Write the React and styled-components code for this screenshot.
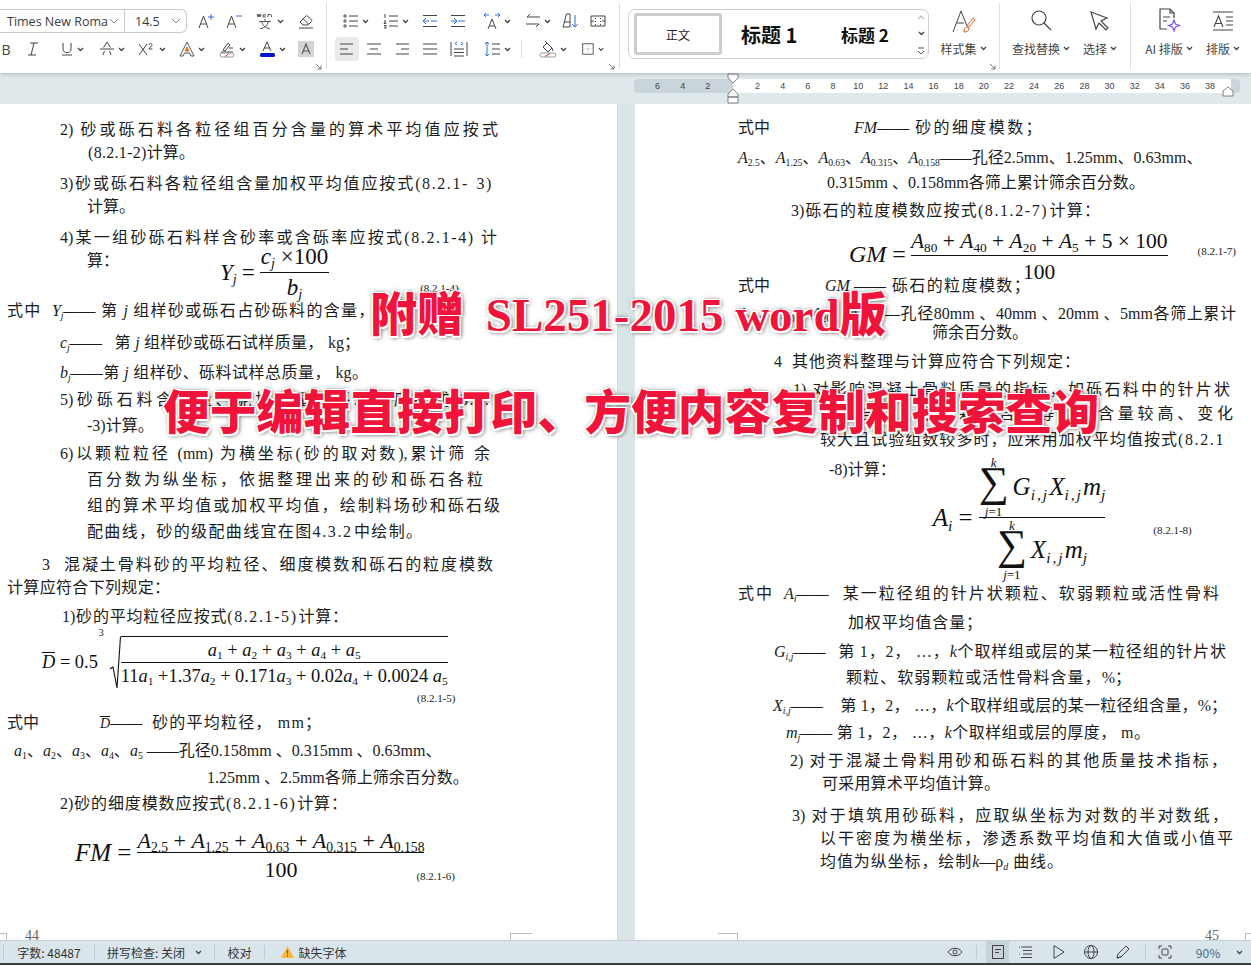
import styled, { createGlobalStyle } from "styled-components";

const GlobalStyle = createGlobalStyle`
  html, body {
    margin: 0;
    height: 100%;
    overflow: hidden;
    background: #dfe8ea;
  }
  * { box-sizing: border-box; }
`;

const UI_FONT = `"Noto Sans CJK SC", "Noto Sans", sans-serif`;
const DOC_FONT = `"Liberation Serif", "Noto Sans CJK SC", serif`;

const Shell = styled.div`
  width: 1251px;
  height: 965px;
  display: flex;
  overflow: hidden;
  flex-direction: column;
  font-family: ${UI_FONT};
`;

/* ---------- ribbon ---------- */
const Toolbar = styled.header`
  z-index: 2;
  height: 73px;
  display: flex;
  flex: 0 0 73px;
  background: #fff;
  box-shadow: 0 1px 4px rgba(60, 70, 75, 0.3);
`;

const Group = styled.section`
  position: relative;
  padding-top: 7px;
  width: ${(p) => p.$w}px;
  margin-left: ${(p) => p.$ml || 0}px;
  padding-left: ${(p) => p.$pl || 0}px;
  display: ${(p) => (p.$flex ? "flex" : "block")};
`;

const Divider = styled.div`
  width: 1px;
  margin: 3px 0 4px;
  background: #dcdfe0;
`;

const Launcher = styled.svg`
  position: absolute;
  right: ${(p) => p.$r || 4}px;
  bottom: 3px;
  width: 7px;
  height: 7px;
`;

const Row = styled.div`
  height: 28px;
  display: flex;
  align-items: center;
  padding-left: ${(p) => p.$pl || 0}px;
`;

const Tool = styled.button`
  border: 0;
  padding: 0;
  height: 24px;
  display: flex;
  flex: 0 0 auto;
  color: #444;
  background: ${(p) => (p.$on ? "#e8e9ea" : "transparent")};
  border-radius: 4px;
  align-items: center;
  justify-content: center;
  gap: ${(p) => p.$gap ?? 3}px;
  width: ${(p) => p.$w}px;
  font: 14px "Open Sans", sans-serif;
`;

const SelectBox = styled.div`
  height: 24px;
  display: flex;
  flex: 0 0 auto;
  color: #3c3c3c;
  font-size: 12.5px;
  padding-left: ${(p) => p.$pl}px;
  align-items: center;
  justify-content: space-between;
  width: ${(p) => p.$w}px;
  border: 1px solid #c9c9c9;
  border-left-width: ${(p) => (p.$joined ? 0 : 1)}px;
  border-radius: ${(p) => (p.$joined ? "0 6px 6px 0" : "6px 0 0 6px")};
  font-family: "Open Sans", "Noto Sans", sans-serif;
`;

const SelectCaret = styled.span`
  display: flex;
  padding-right: 5px;
`;

const StyleBox = styled.div`
  height: 50px;
  width: 301px;
  display: flex;
  margin: 2px 0 0 8px;
  padding: 3px 0 0 5px;
  border-radius: 7px;
  border: 1px solid #cfcfcf;
`;

const NormalCard = styled.div`
  width: 88px;
  height: 42px;
  color: #222;
  display: flex;
  font-size: 12px;
  border-radius: 3px;
  align-items: center;
  justify-content: center;
  border: 3px solid #cdcdcd;
`;

const HeadingCard = styled.div`
  height: 42px;
  color: #111;
  display: flex;
  font-weight: 700;
  white-space: pre;
  align-items: center;
  font-size: ${(p) => p.$size}px;
  width: ${(p) => p.$w}px;
  padding-left: ${(p) => p.$pl}px;
`;

const ScrollArrows = styled.div`
  width: 14px;
  display: flex;
  padding-top: 2px;
  align-items: center;
  flex-direction: column;
  justify-content: space-between;
  height: 42px;
`;

const LargeTool = styled.div`
  flex: 0 0 auto;
  display: flex;
  align-items: center;
  flex-direction: column;
  width: ${(p) => p.$w}px;
`;

const LargeIcon = styled.div`
  height: 28px;
  display: flex;
  align-items: center;
`;

const LargeLabel = styled.div`
  gap: 3px;
  height: 26px;
  color: #444;
  display: flex;
  font-size: 12px;
  white-space: nowrap;
  align-items: center;
`;

/* ---------- ruler ---------- */
const RulerBand = styled.div`
  height: 31px;
  flex: 0 0 31px;
  position: relative;
  background: #dfe8ea;
  padding: 6px 11px 0 634px;
`;

const RulerTrack = styled.div`
  height: 14px;
  display: flex;
  overflow: hidden;
  border-radius: 4px;
  background: #fff;
`;

const RulerMargin = styled.div`
  height: 14px;
  color: #444;
  display: flex;
  font-size: 9px;
  align-items: center;
  background: #c9d5da;
  flex: 0 0 ${(p) => p.$w}px;
  padding-left: ${(p) => p.$pl || 0}px;
  font-family: "Liberation Sans", sans-serif;
`;

const RulerBody = styled.div`
  flex: 1;
  height: 14px;
  color: #444;
  display: flex;
  font-size: 9px;
  align-items: center;
  padding-left: 12px;
  font-family: "Liberation Sans", sans-serif;
`;

const RulerTick = styled.span`
  flex: 0 0 25.15px;
  text-align: center;
`;

const RulerMarker = styled.svg`
  position: absolute;
  top: ${(p) => p.$top}px;
  left: ${(p) => p.$left}px;
  width: 12px;
  height: ${(p) => p.$h}px;
`;

/* ---------- document ---------- */
const Pages = styled.main`
  flex: 1;
  min-height: 0;
  display: flex;
  position: relative;
  overflow: hidden;
`;

const Page = styled.article`
  height: 100%;
  display: flex;
  overflow: hidden;
  background: #fff;
  color: #1c1c1c;
  flex-direction: column;
  font-family: ${DOC_FONT};
  width: ${(p) => p.$w}px;
  padding-top: ${(p) => p.$pt}px;
`;

const Gutter = styled.div`
  flex: 0 0 18px;
  background: #dae5e8;
  border-left: 1px solid #cfdbdf;
`;

const Line = styled.p`
  margin: 0;
  height: 20px;
  flex: 0 0 20px;
  font-size: 16px;
  line-height: 20px;
  white-space: nowrap;
  margin-top: ${(p) => p.$mt || 0}px;
  margin-left: ${(p) => p.$x}px;
  width: ${(p) => (p.$w ? `${p.$w}px` : "auto")};
  text-align: justify;
  text-align-last: ${(p) => (p.$w ? "justify" : "auto")};
`;

const SmallLine = styled(Line)`
  height: 14px;
  flex-basis: 14px;
  font-size: 11px;
  line-height: 14px;
`;

const FormulaRow = styled.div`
  display: flex;
  align-items: flex-start;
  flex: 0 0 ${(p) => p.$h}px;
  height: ${(p) => p.$h}px;
  margin-top: ${(p) => p.$mt || 0}px;
`;

const RowLine = styled(Line)`
  flex: 0 0 auto;
`;

const Formula = styled.div`
  gap: ${(p) => p.$gap ?? 4}px;
  display: flex;
  flex: 0 0 auto;
  color: #111;
  align-items: center;
  white-space: nowrap;
  font-size: ${(p) => p.$size}px;
  margin-left: ${(p) => p.$ml}px;
  margin-top: ${(p) => p.$mt || 0}px;
`;

const FormulaHead = styled.span`
  position: relative;
  top: ${(p) => p.$up ? -p.$up : 0}px;
`;

const Frac = styled.div`
  display: flex;
  align-items: center;
  flex-direction: column;
  font-size: ${(p) => (p.$size ? `${p.$size}px` : "inherit")};
`;

const FracPart = styled.div`
  width: 100%;
  text-align: center;
  line-height: ${(p) => p.$lh - 2 * (p.$up || 0)}px;
  height: ${(p) => p.$lh}px;
  border-bottom: ${(p) => (p.$over ? "1px solid #111" : "0")};
  padding: 0 ${(p) => p.$px || 0}px;
`;

const V = styled.i`
  font-style: italic;
`;

const Sub = styled.sub`
  line-height: 0;
  font-size: ${(p) => p.$fs || 0.62}em;
  vertical-align: ${(p) => p.$va ?? -0.3}em;
  letter-spacing: ${(p) => p.$ls || 0}px;
  font-style: ${(p) => (p.$i ? "italic" : "normal")};
`;

const EqNo = styled.span`
  font-size: 11px;
  color: #222;
  white-space: nowrap;
  margin-left: ${(p) => p.$ml}px;
  margin-top: ${(p) => p.$mt || 0}px;
`;

const Space = styled.span`
  display: inline-block;
  width: ${(p) => p.$w}px;
`;

const Num = styled.span`
  letter-spacing: ${(p) => p.$ls ?? 1.6}px;
`;

const OverBar = styled.span`
  display: inline-block;
  line-height: 1;
  border-top: 1px solid #111;
  font-size: ${(p) => (p.$size ? `${p.$size}px` : "inherit")};
`;

const CubeRoot = styled.div`
  display: flex;
  position: relative;
  align-items: stretch;
`;

const RootIndex = styled.span`
  position: absolute;
  top: -9px;
  left: -10px;
  font-size: 10px;
`;

const RootBody = styled.div`
  border-top: 1px solid #111;
`;

const SumCol = styled.span`
  display: inline-flex;
  align-items: center;
  flex-direction: column;
  vertical-align: middle;
`;

const SumLimit = styled.span`
  height: 13px;
  font-size: 13px;
  line-height: 13px;
`;

const SumSign = styled.span`
  height: 36px;
  font-size: 42px;
  line-height: 26px;
`;

const SumTerm = styled.div`
  gap: 4px;
  display: flex;
  align-items: center;
  justify-content: center;
`;

const PageFoot = styled.div`
  height: 12px;
  display: flex;
  margin-top: auto;
  position: relative;
`;

const PageNo = styled.span`
  position: absolute;
  top: 0;
  color: #666;
  font-size: 14px;
  left: ${(p) => p.$x}px;
`;

const CropMark = styled.div`
  position: absolute;
  top: 5px;
  height: 10px;
  border-top: 1px solid #bbb;
  left: ${(p) => p.$x}px;
  width: ${(p) => p.$w}px;
  border-left: ${(p) => (p.$side === "l" ? "1px solid #bbb" : "0")};
  border-right: ${(p) => (p.$side === "r" ? "1px solid #bbb" : "0")};
`;

/* ---------- promo text over the pages ---------- */
const Promo = styled.div`
  position: absolute;
  left: ${(p) => p.$x}px;
  top: ${(p) => p.$y}px;
  color: #f0143a;
  font-weight: 900;
  white-space: nowrap;
  font-size: ${(p) => p.$size}px;
  line-height: 1;
  letter-spacing: ${(p) => p.$ls || 0}px;
  font-family: "Liberation Serif", "Noto Sans CJK SC", serif;
  text-shadow: -1.5px -1.5px 0 #fff, 1.5px -1.5px 0 #fff, -1.5px 1.5px 0 #fff,
    1.5px 1.5px 0 #fff, 0 0 5px rgba(0, 0, 0, 0.55), 2px 2px 4px rgba(0, 0, 0, 0.5);
`;

/* ---------- status bar ---------- */
const StatusBar = styled.footer`
  height: 25px;
  flex: 0 0 25px;
  color: #333;
  display: flex;
  font-size: 12px;
  align-items: center;
  background: #d9e5ea;
  border-top: 1px solid #c5d2d7;
  border-bottom: 2px solid #3a3f42;
  justify-content: space-between;
`;

const StatusSide = styled.div`
  height: 100%;
  display: flex;
  align-items: center;
`;

const StatusItem = styled.div`
  gap: 4px;
  height: 100%;
  display: flex;
  flex: 0 0 ${(p) => p.$w}px;
  align-items: center;
  justify-content: center;
  white-space: nowrap;
  background: ${(p) => (p.$on ? "#c6d3d8" : "transparent")};
  color: ${(p) => (p.$blue ? "#3f6a8a" : "inherit")};
`;

const StatusSep = styled.span`
  width: 1px;
  height: 14px;
  flex: 0 0 1px;
  background: #bccad0;
`;

const RibbonSep = styled(StatusSep)`
  height: 18px;
  background: #dcdfe0;
`;

/* ---------- icons ---------- */
const Svg = ({ size = 20, w, h, children, sw = 1, color = "#444" }) => (
  <svg
    width={w || size}
    height={h || size}
    viewBox={`0 0 ${w || size} ${h || size}`}
    fill="none"
    stroke={color}
    strokeWidth={sw}
  >
    {children}
  </svg>
);

const Caret = () => (
  <svg width="7" height="5" viewBox="0 0 7 5" fill="none" stroke="#444" strokeWidth="1.3">
    <path d="M1 1l2.5 2.5L6 1" />
  </svg>
);

const ThinCaret = () => (
  <svg width="10" height="6" viewBox="0 0 10 6" fill="none" stroke="#888" strokeWidth="1">
    <path d="M1 1l4 4 4-4" />
  </svg>
);

const Corner = ({ r }) => (
  <Launcher $r={r} viewBox="0 0 7 7" fill="none" stroke="#666" strokeWidth="0.9">
    <path d="M1 1l5 5M6 2.5V6H2.5" />
  </Launcher>
);

const Bars = ({ rows }) => (
  <Svg size={18}>
    {rows.map(([x1, x2, y], i) => (
      <path key={i} d={`M${x1} ${y}H${x2}`} />
    ))}
  </Svg>
);

const GrowA = ({ plus }) => (
  <Svg size={18}>
    <path d="M2 16L6.5 4 11 16M3.6 12h5.8" />
    {plus ? (
      <path d="M11 5h6M14 2v6" stroke="#2a6fe0" />
    ) : (
      <path d="M11 4h6" stroke="#2a6fe0" />
    )}
  </Svg>
);

const Pinyin = () => (
  <Svg w={18} h={18} sw={0.9}>
    <path d="M1 2l1 3 1-3 1 3 1-3M7 3h3M7 5h3M7 3v2M12 5V2.500h2.500c1 0 1 1 1 2.500" />
    <path d="M9 7v2M3 9.500h12M5.500 9.500c1 4 4 6.500 8.500 7.500M12.500 9.500c-1 4-4 6.500-8.500 7.500" />
  </Svg>
);

const Eraser = () => (
  <Svg size={18}>
    <path d="M3 10l6-6a1 1 0 011.5 0l4 4a1 1 0 010 1.5L11 13H6z" />
    <path d="M6 6.5l5.5 5.5M2 16h14" />
  </Svg>
);

const Strike = () => (
  <Svg size={16}>
    <path d="M4.500 6.500L8 1l3.500 5.500M1 8h14M4 14l1.500-4M12 14l-1.500-4" />
  </Svg>
);

const Super = () => (
  <Svg w={18} h={14}>
    <path d="M1 13L9 2M1 2l8 11" />
    <path d="M11 3c0-2 3-2 3 0 0 1-3 3-3 4h3.500" />
  </Svg>
);

const OutlineA = () => (
  <Svg size={16} color="#555">
    <path d="M1 15L8 1l7 14h-3l-1.5-3h-5L4 15z" />
    <path d="M6.3 10L8 6l1.7 4z" fill="#e8862a" stroke="#d46a1a" />
  </Svg>
);

const Highlighter = () => (
  <Svg size={18}>
    <path d="M5 10l5-7 2 2-5 6zM11 8h4M3 12h12" />
    <rect x="2" y="13" width="14" height="4" rx="2" stroke="#999" />
    <path d="M7 16.5l4-3" stroke="#e33" />
  </Svg>
);

const ColorA = () => (
  <Svg size={18}>
    <path d="M5 11L9 2l4 9M6.2 8h5.6" />
    <rect x="2" y="13" width="15" height="4" rx="1.5" fill="#0018c8" stroke="none" />
  </Svg>
);

const GreyA = () => (
  <svg width="16" height="16" viewBox="0 0 16 16" fill="none" stroke="#555" strokeWidth="1.1">
    <rect width="16" height="16" fill="#d4d4d4" stroke="none" />
    <path d="M4 13L8 3l4 10M5.3 10h5.4" />
  </svg>
);

const ListBullets = () => (
  <Svg size={16}>
    <circle cx="2" cy="3" r="1.2" />
    <circle cx="2" cy="8" r="1.2" />
    <circle cx="2" cy="13" r="1.2" />
    <path d="M6 3h9M6 8h9M6 13h9" />
  </Svg>
);

const ListNumbers = () => (
  <Svg size={16}>
    <path d="M2 1v4M1 8h2L1 10.5h2.4M1 12.5h2.2l-1 1.2 1 1.3H1" sw="0.9" />
    <path d="M6 3h9M6 8h9M6 13h9" />
  </Svg>
);

const OutIndent = ({ flip }) => (
  <Svg size={16}>
    <path d="M1 2.5h14M1 13.5h14" />
    {flip ? (
      <path d="M8 8h7M1 8h6M4 5l3 3-3 3" stroke="#2a6fe0" />
    ) : (
      <path d="M1 8h6M9 8h6M4 5L1 8l3 3" stroke="#2a6fe0" />
    )}
  </Svg>
);

const SpacedA = () => (
  <Svg size={18}>
    <path d="M5 17l4-10 4 10M6.3 14h5.4" />
    <path d="M1 3h5M3 1L1 3l2 2M12 3h5M15 1l2 2-2 2" stroke="#2a6fe0" />
  </Svg>
);

const Swap = () => (
  <Svg size={16}>
    <path d="M15 4H2l3-3M1 11h13l-3 3" />
  </Svg>
);

const SortA = () => (
  <Svg size={18}>
    <path d="M2 15L5.5 2H9v13M3 10h6M2 15h7" />
    <path d="M14 3v12M11 12l3 3 3-3" stroke="#2a6fe0" />
  </Svg>
);

const TableDash = () => (
  <Svg size={16}>
    <path d="M1 3h14v10H1zM5.5 5v1M5.5 8v1M5.5 11v1M10.5 5v1M10.5 8v1M10.5 11v1M1 8h3M12 8h3" />
  </Svg>
);

const DistAlign = () => (
  <Svg size={18}>
    <path d="M1 2v14M17 2v14M4 9h10M4 12.5h10M4 16h10" />
    <path d="M7 5L5 3.5 7 2M11 5l2-1.500L11 2" stroke="#2a6fe0" />
  </Svg>
);

const LineSpacing = () => (
  <Svg size={18}>
    <path d="M9 4h8M9 9h8M9 14h8" />
    <path d="M4 2v14M2 4l2-2 2 2M2 14l2 2 2-2" stroke="#2a6fe0" />
  </Svg>
);

const Shading = () => (
  <Svg size={18}>
    <path d="M4 7l4-4 5 5-4 4zM8 3L6 1M13 8l1 3" />
    <rect x="1" y="13" width="16" height="4" rx="2" stroke="#999" />
    <path d="M6 16.500l5-3" stroke="#e33" />
  </Svg>
);

const BorderBox = () => (
  <Svg size={16}>
    <rect x="2" y="2" width="12" height="12" />
    <path d="M8 4v1M8 7v2M8 11v1M4 8h1M7 8h2M11 8h1" stroke="#aaa" />
  </Svg>
);

const StyleSetIcon = () => (
  <Svg size={26}>
    <path d="M2 24L10 3l6 15M6 15h7" />
    <path d="M16 18l6-8 2 2-6 7z" stroke="#d4602a" />
    <path d="M13 24c0-3 1-5 3-5l2 1c0 3-2 4-5 4z" stroke="#d4602a" />
  </Svg>
);

const SearchIcon = () => (
  <Svg size={24} sw={1.2}>
    <circle cx="10" cy="9" r="7" />
    <path d="M15 14l7 7" />
  </Svg>
);

const PointerIcon = () => (
  <Svg size={24} sw={1.2}>
    <path d="M3 3l16 6-6 3 7 7-2 2-7-7-3 6z" />
  </Svg>
);

const AiDocIcon = () => (
  <Svg size={26} sw={1.2}>
    <path d="M18 10V5l-4-4H4v20h7" />
    <path d="M14 1v4h4M7 9h7M7 13h4" />
    <path d="M18 12l1.5 4 4 1.500-4 1.500-1.500 4-1.500-4-4-1.500 4-1.500z" stroke="#7a4ff0" />
  </Svg>
);

const LayoutIcon = () => (
  <Svg size={24} sw={1.1}>
    <path d="M2 3h20M2 21h20M3 18L7.500 7l4.500 11M4.500 14.500h6M15 8h7M15 12h7M15 16h7" />
  </Svg>
);

const Warn = () => (
  <svg width="13" height="12" viewBox="0 0 13 12">
    <path d="M6.500 0L13 12H0z" fill="#f6b73c" />
    <path d="M6.500 4v4M6.500 9v1.500" stroke="#a25a00" strokeWidth="1.200" />
  </svg>
);

const EyeIcon = () => (
  <Svg size={16}>
    <path d="M1 8c3-5 11-5 14 0-3 5-11 5-14 0z" />
    <circle cx="8" cy="8" r="2" />
  </Svg>
);

const DocIcon = () => (
  <Svg size={16}>
    <rect x="2.500" y="1.500" width="11" height="13" />
    <path d="M5 5.500h6M5 8.500h4" />
  </Svg>
);

const OutlineIcon = () => (
  <Svg size={16}>
    <path d="M3 3h11M5 6.500h9M5 10h9M3 13.500h11M1 3h.8M1 10h.8" />
  </Svg>
);

const PlayIcon = () => (
  <Svg size={16}>
    <path d="M3 1.500l10 6.500-10 6.500z" />
  </Svg>
);

const GlobeIcon = () => (
  <Svg size={16}>
    <circle cx="8" cy="8" r="6.500" />
    <ellipse cx="8" cy="8" rx="3" ry="6.500" />
    <path d="M1.500 8h13" />
  </Svg>
);

const PenIcon = () => (
  <Svg size={16}>
    <path d="M2 14l1-4 8-8 3 3-8 8z" />
    <path d="M2 14l4-1" />
  </Svg>
);

const FitIcon = () => (
  <Svg size={16}>
    <path d="M2 5V2h3M11 2h3v3M14 11v3h-3M5 14H2v-3" />
    <rect x="5" y="5" width="6" height="6" rx="1" />
  </Svg>
);

const UpCaret = () => (
  <svg width="8" height="5" viewBox="0 0 8 5" fill="none" stroke="#bbb" strokeWidth="1.200">
    <path d="M1 4l3-3 3 3" />
  </svg>
);

const MoreCaret = () => (
  <svg width="8" height="8" viewBox="0 0 8 8" fill="none" stroke="#555" strokeWidth="1">
    <path d="M1 1h6M1 4l3 3 3-3" />
  </svg>
);

/* ---------- ribbon data ---------- */
const rulerLeft = [6, 4, 2];
const rulerRight = [2, 4, 6, 8, 10, 12, 14, 16, 18, 20, 22, 24, 26, 28, 30, 32, 34, 36, 38];

const Ribbon = () => (
  <Toolbar>
    <Group $w={336} $ml={-10}>
      <Row>
        <SelectBox $w={135} $pl={16}>
          Times New Roma
          <SelectCaret>
            <ThinCaret />
          </SelectCaret>
        </SelectBox>
        <SelectBox $w={62} $pl={10} $joined>
          14.5
          <SelectCaret>
            <ThinCaret />
          </SelectCaret>
        </SelectBox>
        <Space $w={5} />
        <Tool $w={28}><GrowA plus /></Tool>
        <Tool $w={28}><GrowA /></Tool>
        <Tool $w={44}><Pinyin /><Caret /></Tool>
        <Tool $w={28}><Eraser /></Tool>
      </Row>
      <Row $pl={10}>
        <Tool $w={12}>B</Tool>
        <Tool $w={42}><Svg size={14}><path d="M4 1h8M2 13h8M8 1L5 13" /></Svg></Tool>
        <Tool $w={36}><Svg size={14}><path d="M3 1v6c0 5 8 5 8 0V1M2 13h10" /></Svg><Caret /></Tool>
        <Tool $w={44}><Strike /><Caret /></Tool>
        <Tool $w={36}><Super /><Caret /></Tool>
        <Tool $w={44}><OutlineA /><Caret /></Tool>
        <Tool $w={36}><Highlighter /><Caret /></Tool>
        <Tool $w={44}><ColorA /><Caret /></Tool>
        <Tool $w={24}><GreyA /></Tool>
      </Row>
      <Corner />
    </Group>
    <Divider />
    <Group $w={292} $pl={8}>
      <Row>
        <Tool $w={42}><ListBullets /><Caret /></Tool>
        <Tool $w={38}><ListNumbers /><Caret /></Tool>
        <Tool $w={30}><OutIndent /></Tool>
        <Tool $w={26}><OutIndent flip /></Tool>
        <Tool $w={52}><SpacedA /><Caret /></Tool>
        <Tool $w={30}><Swap /><Caret /></Tool>
        <Tool $w={34}><SortA /></Tool>
        <Tool $w={22}><TableDash /></Tool>
      </Row>
      <Row>
        <Tool $w={24} $on><Bars rows={[[2, 15, 4], [2, 10, 9], [2, 15, 14]]} /></Tool>
        <Tool $w={30}><Bars rows={[[2, 16, 4], [5, 13, 9], [2, 16, 14]]} /></Tool>
        <Tool $w={26}><Bars rows={[[3, 16, 4], [8, 16, 9], [3, 16, 14]]} /></Tool>
        <Tool $w={30}><Bars rows={[[2, 16, 4], [2, 16, 9], [2, 16, 14]]} /></Tool>
        <Tool $w={28}><DistAlign /></Tool>
        <Tool $w={48}><LineSpacing /><Caret /></Tool>
        <RibbonSep />
        <Space $w={3} />
        <Tool $w={56}><Shading /><Caret /></Tool>
        <Tool $w={23}><BorderBox /><Caret /></Tool>
      </Row>
      <Corner />
    </Group>
    <Divider />
    <Group $w={309}>
      <StyleBox>
        <NormalCard>正文</NormalCard>
        <HeadingCard $size={20} $w={105} $pl={19}>标题 1</HeadingCard>
        <HeadingCard $size={17} $w={87} $pl={14}>标题 2</HeadingCard>
        <ScrollArrows>
          <UpCaret />
          <Caret />
          <MoreCaret />
        </ScrollArrows>
      </StyleBox>
    </Group>
    <Group $w={70} $pl={6} $flex>
      <LargeTool $w={57}>
        <LargeIcon><StyleSetIcon /></LargeIcon>
        <LargeLabel>样式集<Caret /></LargeLabel>
      </LargeTool>
      <Corner r={3} />
    </Group>
    <Divider />
    <Group $w={130} $pl={7} $flex>
      <LargeTool $w={68}>
        <LargeIcon><SearchIcon /></LargeIcon>
        <LargeLabel>查找替换<Caret /></LargeLabel>
      </LargeTool>
      <LargeTool $w={50}>
        <LargeIcon><PointerIcon /></LargeIcon>
        <LargeLabel>选择<Caret /></LargeLabel>
      </LargeTool>
    </Group>
    <Divider />
    <Group $w={120} $pl={9} $flex>
      <LargeTool $w={58}>
        <LargeIcon><AiDocIcon /></LargeIcon>
        <LargeLabel>AI 排版<Caret /></LargeLabel>
      </LargeTool>
      <LargeTool $w={50}>
        <LargeIcon><LayoutIcon /></LargeIcon>
        <LargeLabel>排版<Caret /></LargeLabel>
      </LargeTool>
    </Group>
  </Toolbar>
);

const Ruler = () => (
  <RulerBand>
    <RulerTrack>
      <RulerMargin $w={99} $pl={11}>
        {rulerLeft.map((n) => (
          <RulerTick key={n}>{n}</RulerTick>
        ))}
      </RulerMargin>
      <RulerBody>
        {rulerRight.map((n) => (
          <RulerTick key={n}>{n}</RulerTick>
        ))}
      </RulerBody>
      <RulerMargin $w={9} />
    </RulerTrack>
    <RulerMarker $top={0} $left={727} $h={11} viewBox="0 0 12 11" fill="#fff" stroke="#666" strokeWidth="0.8">
      <path d="M1 1h10v4l-5 5-5-5z" />
    </RulerMarker>
    <RulerMarker $top={15} $left={727} $h={16} viewBox="0 0 12 16" fill="#fff" stroke="#666" strokeWidth="0.8">
      <path d="M6 1l5 5v3H1V6zM1 9h10v6H1z" />
    </RulerMarker>
    <RulerMarker $top={13} $left={1222} $h={11} viewBox="0 0 12 11" fill="#fff" stroke="#666" strokeWidth="0.8">
      <path d="M6 1l5 4v5H1V5z" />
    </RulerMarker>
  </RulerBand>
);

/* ---------- document pages ---------- */
const LeftPage = () => (
  <Page $w={617} $pt={16}>
    <Line $x={60} $w={438}>2) 砂或砾石料各粒径组百分含量的算术平均值应按式</Line>
    <Line $x={88} $mt={3}><Num $ls={0.3}>(8.2.1-2)</Num>计算。</Line>
    <Line $x={60} $w={433} $mt={11}>3)砂或砾石料各粒径组含量加权平均值应按式<Num>(8.2.1- 3)</Num></Line>
    <Line $x={87} $mt={3}>计算。</Line>
    <Line $x={60} $w={437} $mt={11}>4)某一组砂砾石料样含砂率或含砾率应按式<Num>(8.2.1-4)</Num> 计</Line>
    <FormulaRow $h={50} $mt={3}>
      <RowLine $x={87}>算：</RowLine>
      <Formula $size={23} $ml={101} $mt={-7} $gap={5}>
        <span><V>Y</V><Sub $i>j</Sub></span>
        <span>=</span>
        <Frac>
          <FracPart $lh={29} $up={2} $over $px={1}><V>c</V><Sub $i>j</Sub> ×100</FracPart>
          <FracPart $lh={28} $up={-1}><V>b</V><Sub $i>j</Sub></FracPart>
        </Frac>
      </Formula>
      <EqNo $ml={91} $mt={31}>(8.2.1-4)</EqNo>
    </FormulaRow>
    <Line $x={7} $w={398}>
      式中 <Space $w={5} /><V>Y<Sub $i>j</Sub></V>—— 第 <V>j</V> 组样砂或砾石占砂砾料的含量，%；
    </Line>
    <Line $x={60} $w={300} $mt={12}><V>c<Sub $i>j</Sub></V>—— <Space $w={8} />第 <V>j</V> 组样砂或砾石试样质量， kg；</Line>
    <Line $x={60} $w={308} $mt={10}><V>b<Sub $i>j</Sub></V>——第 <V>j</V> 组样砂、砾料试样总质量， kg。</Line>
    <Line $x={60} $w={440} $mt={7}>5)砂砾石料含泥量、泥块含量的平均值应按式<Num>(8.2.1</Num></Line>
    <Line $x={87} $mt={6}>-3)计算。</Line>
    <Line $x={60} $w={430} $mt={8}>6)以颗粒粒径 (mm) 为横坐标(砂的取对数),累计筛 余</Line>
    <Line $x={87} $w={396} $mt={6}>百分数为纵坐标，依据整理出来的砂和砾石各粒</Line>
    <Line $x={87} $w={413} $mt={6}>组的算术平均值或加权平均值，绘制料场砂和砾石级</Line>
    <Line $x={87} $w={335} $mt={6}>配曲线，砂的级配曲线宜在图<Num>4.3.2</Num>中绘制。</Line>
    <Line $x={42} $w={451} $mt={13}>3 <Space $w={6} />混凝土骨料砂的平均粒径、细度模数和砾石的粒度模数</Line>
    <Line $x={7} $w={163} $mt={3}>计算应符合下列规定：</Line>
    <Line $x={62} $w={286} $mt={9}>1)砂的平均粒径应按式<Num>(8.2.1-5)</Num>计算：</Line>
    <FormulaRow $h={55} $mt={9}>
      <Formula $size={18.4} $ml={42} $gap={4}>
        <span><OverBar><V>D</V></OverBar> = 0.5</span>
        <Space $w={3} />
        <CubeRoot>
          <RootIndex>3</RootIndex>
          <svg width="12" height="53" viewBox="0 0 12 53" fill="none" stroke="#111">
            <path d="M1 33l3-2 4 21L11.500 0.500" strokeWidth="1.100" />
          </svg>
          <RootBody>
            <FracPart $lh={26} $over>
              <V>a</V><Sub>1</Sub> + <V>a</V><Sub>2</Sub> + <V>a</V><Sub>3</Sub> + <V>a</V><Sub>4</Sub> + <V>a</V><Sub>5</Sub>
            </FracPart>
            <FracPart $lh={26}>
              11<V>a</V><Sub>1</Sub> +1.37<V>a</V><Sub>2</Sub> + 0.171<V>a</V><Sub>3</Sub> + 0.02<V>a</V><Sub>4</Sub> + 0.0024 <V>a</V><Sub>5</Sub>
            </FracPart>
          </RootBody>
        </CubeRoot>
      </Formula>
    </FormulaRow>
    <SmallLine $x={417}>(8.2.1-5)</SmallLine>
    <Line $x={7} $mt={8}>式中<Space $w={61} /><OverBar $size={14}><V>D</V></OverBar>—— <Space $w={6} /><Num $ls={1.2}>砂的平均粒径， mm；</Num></Line>
    <Line $x={14} $w={426} $mt={8}>
      <V>a</V><Sub>1</Sub>、<V>a</V><Sub>2</Sub>、<V>a</V><Sub>3</Sub>、<V>a</V><Sub>4</Sub>、<V>a</V><Sub>5</Sub> ——孔径0.158mm 、0.315mm 、0.63mm、
    </Line>
    <Line $x={207} $w={261} $mt={7}>1.25mm 、2.5mm各筛上筛余百分数。</Line>
    <Line $x={60} $w={287} $mt={6}>2)砂的细度模数应按式<Num>(8.2.1-6)</Num>计算：</Line>
    <FormulaRow $h={52} $mt={14}>
      <Formula $size={25} $ml={75} $gap={6}>
        <FormulaHead $up={3}><V>FM</V> =</FormulaHead>
        <Frac $size={22}>
          <FracPart $lh={25} $over>
            <V>A</V><Sub>2.5</Sub> + <V>A</V><Sub>1.25</Sub> + <V>A</V><Sub>0.63</Sub> + <V>A</V><Sub>0.315</Sub> + <V>A</V><Sub>0.158</Sub>
          </FracPart>
          <FracPart $lh={30} $up={-2}>100</FracPart>
        </Frac>
      </Formula>
      <EqNo $ml={-8} $mt={42}>(8.2.1-6)</EqNo>
    </FormulaRow>
    <PageFoot>
      <PageNo $x={25}>44</PageNo>
      <CropMark $x={-1} $w={8} $side="r" />
      <CropMark $x={510} $w={22} $side="l" />
    </PageFoot>
  </Page>
);

const RightPage = () => (
  <Page $w={616} $pt={14}>
    <Line $x={103}>式中<Space $w={84} /><V>FM</V>—— <Space $w={2} /><Num $ls={2.4}>砂的细度模数；</Num></Line>
    <Line $x={103} $w={434} $mt={10}>
      <V>A</V><Sub $fs={0.6}>2.5</Sub>、<V>A</V><Sub $fs={0.6}>1.25</Sub>、<V>A</V><Sub $fs={0.6}>0.63</Sub>、<V>A</V><Sub $fs={0.6}>0.315</Sub>、<V>A</V><Sub $fs={0.6}>0.158</Sub>——孔径2.5mm、1.25mm、0.63mm、
    </Line>
    <Line $x={192} $w={316} $mt={5}>0.315mm 、0.158mm各筛上累计筛余百分数。</Line>
    <Line $x={156} $w={309} $mt={8}>3)砾石的粒度模数应按式<Num>(8.1.2-7)</Num>计算：</Line>
    <FormulaRow $h={48} $mt={7}>
      <Formula $size={24} $ml={214} $gap={5}>
        <FormulaHead $up={4}><V>GM</V> =</FormulaHead>
        <Frac $size={21.5}>
          <FracPart $lh={28} $up={1} $over>
            <V>A</V><Sub>80</Sub> + <V>A</V><Sub>40</Sub> + <V>A</V><Sub>20</Sub> + <V>A</V><Sub>5</Sub> + 5 × 100
          </FracPart>
          <FracPart $lh={32}>100</FracPart>
        </Frac>
      </Formula>
      <EqNo $ml={30} $mt={17}>(8.2.1-7)</EqNo>
    </FormulaRow>
    <Line $x={103}>式中<Space $w={55} /><V>GM</V> —— <Space $w={2} /><Num $ls={1.4}>砾石的粒度模数；</Num></Line>
    <Line $x={103} $w={498} $mt={8}>
      <V>A</V><Sub>80</Sub>、<V>A</V><Sub>40</Sub>、<V>A</V><Sub>20</Sub>、<V>A</V><Sub>5</Sub> ——孔径80mm 、40mm 、20mm 、5mm各筛上累计
    </Line>
    <Line $x={297} $mt={-1}>筛余百分数。</Line>
    <Line $x={139} $w={306} $mt={9}>4 <Space $w={4} />其他资料整理与计算应符合下列规定：</Line>
    <Line $x={158} $w={437} $mt={8}>1) 对影响混凝土骨料质量的指标，如砾石料中的针片状</Line>
    <Line $x={185} $w={413} $mt={4}>颗粒含量、软弱颗粒含量等，当含量较高、变化</Line>
    <Line $x={185} $w={405} $mt={6}>较大且试验组数较多时，应采用加权平均值按式<Num>(8.2.1</Num></Line>
    <FormulaRow $h={124} $mt={10}>
      <RowLine $x={194}>-8)计算：</RowLine>
      <Formula $size={25} $ml={37} $mt={-5} $gap={6}>
        <span><V>A</V><Sub $i>i</Sub> =</span>
        <Frac>
          <FracPart $lh={63} $over>
            <SumTerm>
              <SumCol>
                <SumLimit><V>k</V></SumLimit>
                <SumSign>∑</SumSign>
                <SumLimit><V>j</V>=1</SumLimit>
              </SumCol>
              <span><V>G</V><Sub $i $ls={2}>i,j</Sub><V>X</V><Sub $i $ls={2}>i,j</Sub><V>m</V><Sub $i>j</Sub></span>
            </SumTerm>
          </FracPart>
          <FracPart $lh={63}>
            <SumTerm>
              <SumCol>
                <SumLimit><V>k</V></SumLimit>
                <SumSign>∑</SumSign>
                <SumLimit><V>j</V>=1</SumLimit>
              </SumCol>
              <span><V>X</V><Sub $i $ls={2}>i,j</Sub><V>m</V><Sub $i>j</Sub></span>
            </SumTerm>
          </FracPart>
        </Frac>
      </Formula>
      <EqNo $ml={48} $mt={64}>(8.2.1-8)</EqNo>
    </FormulaRow>
    <Line $x={103} $w={481}>式中 <Space $w={4} /><V>A<Sub $i>i</Sub></V>—— <Space $w={6} />某一粒径组的针片状颗粒、软弱颗粒或活性骨料</Line>
    <Line $x={213} $w={134} $mt={9}>加权平均值含量；</Line>
    <Line $x={139} $w={452} $mt={9}><V>G<Sub $i>i,j</Sub></V>—— <Space $w={7} />第 1，2， …，<V>k</V>个取样组或层的某一粒径组的针片状</Line>
    <Line $x={211} $w={285} $mt={6}>颗粒、软弱颗粒或活性骨料含量，%；</Line>
    <Line $x={138} $w={454} $mt={8}><V>X<Sub $i>i,j</Sub></V>—— <Space $w={13} />第 1，2， …，<V>k</V>个取样组或层的某一粒径组含量，%；</Line>
    <Line $x={151} $w={364} $mt={7}><V>m<Sub $i>j</Sub></V>—— 第 1，2， …，<V>k</V>个取样组或层的厚度， m。</Line>
    <Line $x={155} $w={437} $mt={8}>2) 对于混凝土骨料用砂和砾石料的其他质量技术指标，</Line>
    <Line $x={187} $w={178} $mt={3}>可采用算术平均值计算。</Line>
    <Line $x={157} $w={436} $mt={12}>3) 对于填筑用砂砾料，应取纵坐标为对数的半对数纸，</Line>
    <Line $x={185} $w={413} $mt={3}>以干密度为横坐标，渗透系数平均值和大值或小值平</Line>
    <Line $x={185} $w={243} $mt={3}>均值为纵坐标，绘制<V>k</V>—ρ<Sub $i>d</Sub> 曲线。</Line>
    <PageFoot>
      <PageNo $x={570}>45</PageNo>
      <CropMark $x={83} $w={20} $side="r" />
      <CropMark $x={610} $w={8} $side="l" />
    </PageFoot>
  </Page>
);

const Status = () => (
  <StatusBar>
    <StatusSide>
      <Space $w={3} />
      <StatusSep />
      <StatusItem $w={90}>字数: 48487</StatusItem>
      <StatusSep />
      <StatusItem $w={119}>拼写检查: 关闭 <Space $w={2} /><Caret /></StatusItem>
      <StatusSep />
      <StatusItem $w={49}>校对</StatusItem>
      <StatusSep />
      <StatusItem $w={98}><Warn />缺失字体</StatusItem>
    </StatusSide>
    <StatusSide>
      <StatusItem $w={30}><EyeIcon /></StatusItem>
      <Space $w={6} />
      <StatusSep />
      <Space $w={9} />
      <StatusItem $w={23} $on><DocIcon /></StatusItem>
      <StatusItem $w={33}><OutlineIcon /></StatusItem>
      <StatusItem $w={33}><PlayIcon /></StatusItem>
      <StatusItem $w={32}><GlobeIcon /></StatusItem>
      <StatusItem $w={32}><PenIcon /></StatusItem>
      <Space $w={6} />
      <StatusSep />
      <StatusItem $w={38}><FitIcon /></StatusItem>
      <StatusItem $w={48} $blue>90%</StatusItem>
      <StatusItem $w={14}><Caret /></StatusItem>
      <Space $w={5} />
    </StatusSide>
  </StatusBar>
);

const App = () => (
  <Shell>
    <GlobalStyle />
    <Ribbon />
    <Ruler />
    <Pages>
      <LeftPage />
      <Gutter />
      <RightPage />
      <Promo $x={370} $y={188} $size={47}>附赠 <Space $w={10} />SL251-2015 word版</Promo>
      <Promo $x={163} $y={286} $size={46.8}>便于编辑直接打印、方便内容复制和搜索查询</Promo>
    </Pages>
    <Status />
  </Shell>
);

export default App;
